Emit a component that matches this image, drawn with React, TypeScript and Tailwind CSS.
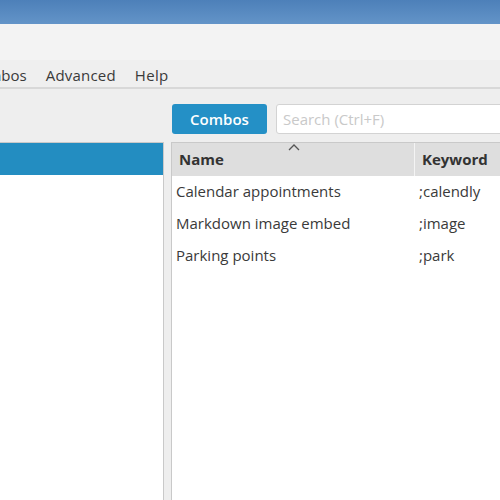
import React from "react";

export default function App() {
  const rows = [
    ["Calendar appointments", ";calendly"],
    ["Markdown image embed", ";image"],
    ["Parking points", ";park"],
  ];
  return (
    <div
      className="w-[500px] h-[500px] overflow-hidden bg-[#eeeeee] flex flex-col text-[#333333]"
      style={{ fontFamily: '"Open Sans", "Noto Sans", sans-serif' }}
    >
      <div className="h-[24px] shrink-0 bg-gradient-to-b from-[#4d80b9] to-[#6394c8]" />
      <div className="h-[36px] shrink-0 bg-[#f3f3f3]" />
      <div className="h-[29px] shrink-0 bg-[#efefef] border-b-2 border-[#d8d8d8] flex items-center pt-[3px] gap-[19px] text-[15px] text-[#3a3a3a]">
        <span className="-ml-[31px]">Combos</span>
        <span className="tracking-[0.2px]">Advanced</span>
        <span className="tracking-[0.3px]">Help</span>
      </div>
      <div className="flex flex-1 min-h-0">
        <div className="w-[164px] shrink-0 flex flex-col">
          <div className="h-[53px] shrink-0" />
          <div className="flex-1 bg-white border-t border-r border-[#c9c9c9]">
            <div className="h-[32px] bg-[#238dc1]" />
          </div>
        </div>
        <div className="ml-[7px] flex-1 flex flex-col min-w-0 overflow-hidden">
          <div className="h-[53px] shrink-0 flex items-start pt-[15px] pl-[1px] gap-[9px]">
            <button className="w-[95px] h-[30px] shrink-0 rounded-[3px] bg-[#2490c6] text-white text-[15px] font-semibold flex items-center justify-center">
              Combos
            </button>
            <div className="w-[260px] shrink-0 h-[30px] bg-white border border-[#d3d3d3] rounded-[3px] flex items-center pl-[6px] text-[15px] text-[#c9c9c9] whitespace-nowrap">
              Search (Ctrl+F)
            </div>
          </div>
          <div className="flex-1 bg-white border-t border-l border-[#c9c9c9] text-[15px]">
            <div className="relative h-[33px] bg-[#dedede] flex items-center font-bold text-[#333333]">
              <div className="w-[243px] pl-[7px] border-r border-[#f4f4f4] h-full flex items-center">Name</div>
              <div className="pl-[7px]">Keyword</div>
              <svg className="absolute left-[116px] top-[1px]" width="12" height="7" viewBox="0 0 12 7">
                <polyline points="1,6 6,1 11,6" fill="none" stroke="#555" strokeWidth="1.3" />
              </svg>
            </div>
            {rows.map(([n, k]) => (
              <div key={n} className="h-[32px] flex items-center pb-[2px] text-[#3a3a3a]">
                <div className="w-[243px] pl-[4px] whitespace-nowrap">{n}</div>
                <div className="pl-[4px]">{k}</div>
              </div>
            ))}
          </div>
        </div>
      </div>
    </div>
  );
}
